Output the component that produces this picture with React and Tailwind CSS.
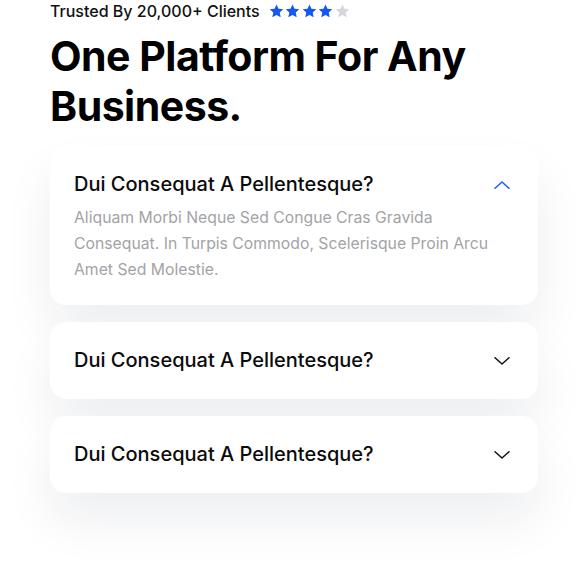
import React from "react";

const Star = ({ filled }) => (
  <svg width="15" height="14" viewBox="0 0 24 23" className={filled ? "text-[#1557f0]" : "text-[#d4d7dd]"}>
    <path fill="currentColor" d="M12 0.8l3.3 7.1 7.8.9-5.8 5.3 1.6 7.7L12 17.9l-6.9 3.9 1.6-7.7L.9 8.8l7.8-.9z" />
  </svg>
);

const Chevron = ({ up }) => (
  <svg width="16" height="8" viewBox="0 0 16 8" fill="none" className={up ? "text-[#1a5cf2]" : "text-[#111]"}>
    <path d={up ? "M1 7.3L8 1l7 6.3" : "M1 0.7L8 7l7-6.3"} stroke="currentColor" strokeWidth="1.5" strokeLinecap="round" strokeLinejoin="round" />
  </svg>
);

const Card = ({ open }) => (
  <div className={"rounded-[16px] bg-white pl-6 pr-[28px] shadow-[0_28px_50px_rgba(20,30,60,0.07)] " + (open ? "pt-[26px] pb-[22px]" : "py-[26px]")}>
    <div className="flex items-center justify-between h-[25px]">
      <div className="text-[20px] font-medium tracking-[0px] text-[#0b0b0b] leading-[25px]">Dui Consequat A Pellentesque?</div>
      <Chevron up={open} />
    </div>
    {open && (
      <p className="mt-2 text-[15.75px] leading-[26px] text-[#a3a3a6] tracking-[0px] pr-[10px]">
        Aliquam Morbi Neque Sed Congue Cras Gravida Consequat. In Turpis Commodo, Scelerisque Proin Arcu Amet Sed Molestie.
      </p>
    )}
  </div>
);

export default function App() {
  return (
    <div className="w-[588px] h-[583px] bg-white px-[50px] overflow-hidden" style={{ fontFamily: "Inter, 'Noto Sans', sans-serif" }}>
      <div className="flex items-center h-[22px]">
        <span className="text-[16px] font-medium tracking-[0px] text-[#111]">Trusted By 20,000+ Clients</span>
        <div className="ml-[9px] flex gap-[1.5px]">
          <Star filled />
          <Star filled />
          <Star filled />
          <Star filled />
          <Star />
        </div>
      </div>
      <h1 className="mt-[9px] text-[41px] font-bold leading-[50px] tracking-[-0.5px] text-black">
        One Platform For Any
        <br />
        Business.
      </h1>
      <div className="mt-[15px] flex flex-col gap-[17px]">
        <Card open />
        <Card />
        <Card />
      </div>
    </div>
  );
}
